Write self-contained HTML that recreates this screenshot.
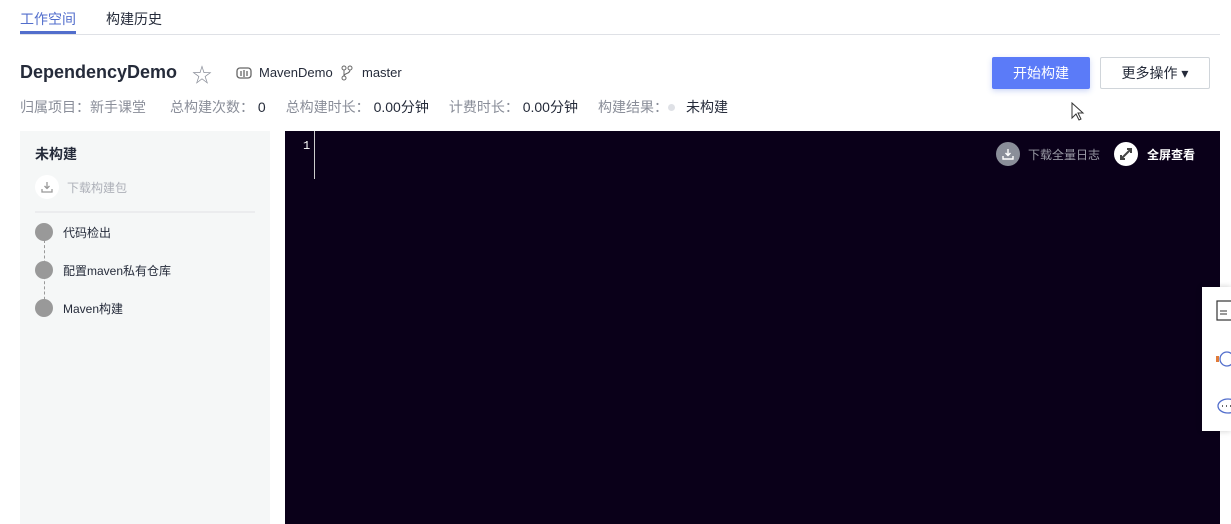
<!DOCTYPE html>
<html><head><meta charset="utf-8"><style>
body{margin:0;width:1231px;height:524px;overflow:hidden;background:#fff;font-family:"Liberation Sans","Noto Sans CJK SC",sans-serif;position:relative}
.a{position:absolute;white-space:nowrap}
.g{color:#8a8e99;font-size:14px}
.d{color:#252b3a;font-size:14px}
</style></head><body>
<div class="a" style="left:20px;top:9px;font-size:14px;color:#526ecc">工作空间</div>
<div class="a" style="left:106px;top:9px;font-size:14px;color:#252b3a">构建历史</div>
<div class="a" style="left:20px;top:34px;width:1200px;height:1px;background:#dfe1e6"></div>
<div class="a" style="left:20px;top:31px;width:56px;height:3px;background:#526ecc"></div>

<div class="a" style="left:20px;top:62px;font-size:18px;font-weight:bold;color:#252b3a">DependencyDemo</div>
<div class="a" style="left:192px;top:59px;font-size:20px;color:#8a8e99">☆</div>
<svg class="a" style="left:236px;top:66px" width="16" height="14" viewBox="0 0 16 14"><rect x="1" y="2" width="14" height="10" rx="3" fill="none" stroke="#666" stroke-width="1.3"/><path d="M5 5v5M8 4v7M11 5v5" stroke="#666" stroke-width="1.3"/></svg>
<div class="a" style="left:259px;top:65px;font-size:13px;color:#252b3a">MavenDemo</div>
<svg class="a" style="left:340px;top:65px" width="14" height="16" viewBox="0 0 14 16"><circle cx="4" cy="3" r="2" fill="none" stroke="#666"/><circle cx="10" cy="3" r="2" fill="none" stroke="#666"/><circle cx="4" cy="13" r="2" fill="none" stroke="#666"/><path d="M4 5v6M10 5c0 4-6 3-6 6" fill="none" stroke="#666"/></svg>
<div class="a" style="left:362px;top:65px;font-size:13px;color:#252b3a">master</div>

<div class="a" style="left:992px;top:57px;width:98px;height:32px;background:#5b7bf8;border-radius:2px;color:#fff;font-size:14px;text-align:center;line-height:32px;box-shadow:0 2px 6px rgba(94,124,224,.3)">开始构建</div>
<div class="a" style="left:1100px;top:57px;width:108px;height:30px;border:1px solid #d0d5da;border-radius:2px;color:#252b3a;font-size:14px;text-align:center;line-height:30px">更多操作 ▾</div>
<svg class="a" style="left:1071px;top:102px" width="14" height="20" viewBox="0 0 14 20"><path d="M1 1v15l4-4 3 6 2-1-3-6h5z" fill="#fff" stroke="#333"/></svg>

<div class="a" style="left:20px;top:97px;font-size:14px"><span class="g">归属项目：新手课堂</span><span class="g" style="margin-left:24px">总构建次数：</span><span class="d"> 0</span><span class="g" style="margin-left:20px">总构建时长：</span><span class="d"> 0.00分钟</span><span class="g" style="margin-left:20px">计费时长：</span><span class="d"> 0.00分钟</span><span class="g" style="margin-left:20px">构建结果：</span><span style="display:inline-block;width:7px;height:7px;border-radius:50%;background:#dfe1e6;margin:0 8px 1px 0"></span><span class="d" style="margin-left:3px">未构建</span></div>

<div class="a" style="left:20px;top:131px;width:250px;height:393px;background:#f5f7f7"></div>
<div class="a" style="left:35px;top:144px;font-size:14px;font-weight:bold;color:#252b3a">未构建</div>
<div class="a" style="left:35px;top:175px;width:24px;height:24px;border-radius:50%;background:#fff"></div>
<svg class="a" style="left:41px;top:181px" width="12" height="12" viewBox="0 0 12 12"><path d="M6 1v6M3.5 5L6 7.5 8.5 5M1 8v3h10V8" fill="none" stroke="#999" stroke-width="1.3"/></svg>
<div class="a" style="left:67px;top:179px;font-size:12px;color:#adb0b8">下载构建包</div>
<div class="a" style="left:35px;top:211px;width:220px;height:2px;background:#ebecee"></div>
<div class="a" style="left:44px;top:240px;height:70px;border-left:1px dashed #999"></div>
<div class="a" style="left:35px;top:223px;width:18px;height:18px;border-radius:50%;background:#999"></div>
<div class="a" style="left:35px;top:261px;width:18px;height:18px;border-radius:50%;background:#999"></div>
<div class="a" style="left:35px;top:299px;width:18px;height:18px;border-radius:50%;background:#999"></div>
<div class="a" style="left:63px;top:224px;font-size:12px;color:#252b3a">代码检出</div>
<div class="a" style="left:63px;top:262px;font-size:12px;color:#252b3a">配置maven私有仓库</div>
<div class="a" style="left:63px;top:300px;font-size:12px;color:#252b3a">Maven构建</div>

<div class="a" style="left:285px;top:131px;width:935px;height:393px;background:#0a0019"></div>
<div class="a" style="left:303px;top:139px;font-size:12px;color:#fff;font-family:'Liberation Mono',monospace">1</div>
<div class="a" style="left:314px;top:131px;width:1px;height:48px;background:#ccc"></div>
<div class="a" style="left:996px;top:142px;width:24px;height:24px;border-radius:50%;background:#8a8e99"></div>
<svg class="a" style="left:1002px;top:148px" width="12" height="12" viewBox="0 0 12 12"><path d="M6 1v6M3.5 5L6 7.5 8.5 5M1 8v3h10V8" fill="none" stroke="#fff" stroke-width="1.4"/></svg>
<div class="a" style="left:1028px;top:146px;font-size:12px;color:#9a9ba6">下载全量日志</div>
<div class="a" style="left:1114px;top:142px;width:24px;height:24px;border-radius:50%;background:#fff"></div>
<svg class="a" style="left:1119px;top:147px" width="14" height="14" viewBox="0 0 14 14"><path d="M2 12L12 2M8 2h4v4M2 8v4h4" fill="none" stroke="#444" stroke-width="2"/></svg>
<div class="a" style="left:1147px;top:146px;font-size:12px;font-weight:bold;color:#fff">全屏查看</div>

<div class="a" style="left:1202px;top:287px;width:29px;height:144px;background:#fff;box-shadow:0 0 6px rgba(0,0,0,.2)"></div>
<svg class="a" style="left:1216px;top:300px" width="15" height="120" viewBox="0 0 15 120"><rect x="1" y="1" width="16" height="19" fill="none" stroke="#333" stroke-width="1.2"/><path d="M4 11h7M4 14h7" stroke="#333"/><circle cx="11" cy="59" r="7" fill="none" stroke="#526ecc" stroke-width="1.3"/><rect x="0" y="56" width="3" height="6" fill="#e07b39"/><ellipse cx="12" cy="106" rx="10" ry="7" fill="none" stroke="#526ecc" stroke-width="1.3"/><path d="M6 106h1M10 106h1M14 106h1" stroke="#333" stroke-width="1.5"/></svg>
</body></html>
